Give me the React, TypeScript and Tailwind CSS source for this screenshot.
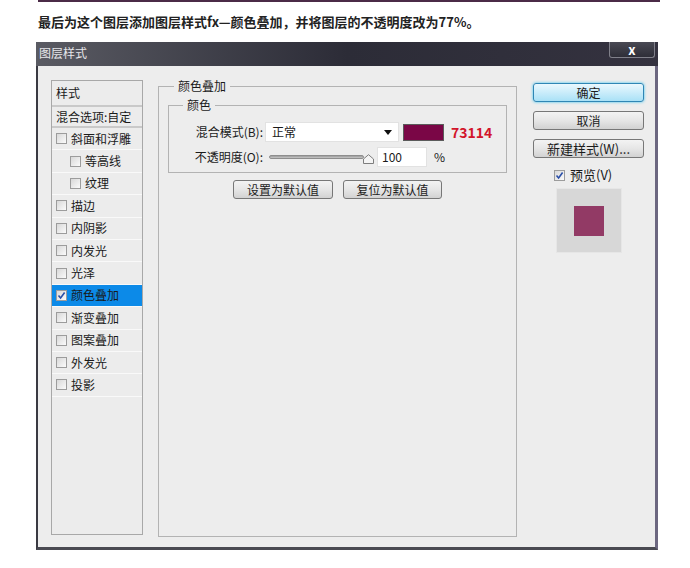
import type { ReactNode } from 'react';

const FONT = "font-['Noto_Sans_CJK_SC',sans-serif]";

type StyleItem = { label: string; indent?: boolean; checked?: boolean; selected?: boolean };

const STYLE_ITEMS: StyleItem[] = [
  { label: '斜面和浮雕' },
  { label: '等高线', indent: true },
  { label: '纹理', indent: true },
  { label: '描边' },
  { label: '内阴影' },
  { label: '内发光' },
  { label: '光泽' },
  { label: '颜色叠加', checked: true, selected: true },
  { label: '渐变叠加' },
  { label: '图案叠加' },
  { label: '外发光' },
  { label: '投影' },
];

function CheckBox({ checked }: { checked?: boolean }) {
  return (
    <span className="w-[11px] h-[11px] shrink-0 border border-[#9c9c9c] bg-linear-to-br from-[#d8d8d8] to-[#fbfbfb] flex items-center justify-center bg-white">
      {checked && (
        <svg width="9" height="9" viewBox="0 0 9 9">
          <path d="M1.5 4.5 L3.6 7 L7.6 1.6" fill="none" stroke="#2a4fa8" strokeWidth="1.6" />
        </svg>
      )}
    </span>
  );
}

function WinButton({ children, primary, className = '' }: { children: ReactNode; primary?: boolean; className?: string }) {
  return (
    <div
      className={`h-[19px] rounded-[3px] border flex items-center justify-center text-[12px] leading-none text-[#1c1c1c] ${
        primary
          ? 'border-[#2f86b5] bg-linear-to-b from-[#eaf8fe] to-[#a9e1f6] shadow-[0_0_3px_#39c4f0]'
          : 'border-[#777] bg-linear-to-b from-[#f3f3f3] via-[#e6e6e6] to-[#d2d2d2]'
      } ${className}`}
    >
      {children}
    </div>
  );
}

export default function App() {
  return (
    <div className={`w-[690px] h-[568px] bg-white overflow-hidden ${FONT}`}>
      <div className="ml-[38px] w-[622px] h-[2px] bg-[#4b2b47]" />
      <div className="mt-[11px] ml-[38px] text-[13px] leading-[18px] font-bold text-[#222]">
        最后为这个图层添加图层样式fx—颜色叠加，并将图层的不透明度改为77%。
      </div>

      {/* dialog */}
      <div className="mt-[11px] ml-[36px] w-[622px]">
        <div className="h-[24px] flex items-start justify-between bg-linear-to-r from-[#5a5b63] via-[#2c2c37] to-[#34323f]">
          <span className="pl-[3px] pt-[3px] text-[12px] leading-[16px] text-[#e6e6ea]">图层样式</span>
          <div className="mr-[3px] w-[46px] h-[16px] border border-t-0 border-[#80808a] rounded-b-[3px] bg-linear-to-b from-[#4a4a54] to-[#2e2e38] flex items-center justify-center text-white text-[13px] font-bold leading-none">
            x
          </div>
        </div>

        <div className="h-[484px] flex items-start pt-[12px] pl-[13px] bg-[#ededed] border-l-2 border-r-[3px] border-b-[3px] border-l-[#3a3a42] border-r-[#6c6780] border-b-[#4a4a52] text-[12px] text-[#1a1a1a]">
          {/* style list */}
          <div className="mt-[2px] w-[92px] h-[455px] border border-[#a8a8a8] bg-[#ececec]">
            <div className="h-[26px] flex items-center pl-[4px] border-b-2 border-[#c9c9c9]">样式</div>
            <div className="h-[21px] flex items-center pl-[4px] border-b-2 border-[#c9c9c9] whitespace-nowrap">混合选项:自定</div>
            {STYLE_ITEMS.map((item) => (
              <div
                key={item.label}
                className={`h-[22.4px] flex items-center gap-[4px] border-b border-[#f9f9f9] ${
                  item.indent ? 'pl-[18px]' : 'pl-[4px]'
                } ${item.selected ? 'bg-[#0c8ae8]' : ''}`}
              >
                <CheckBox checked={item.checked} />
                <span className="whitespace-nowrap">{item.label}</span>
              </div>
            ))}
          </div>

          {/* color overlay group */}
          <fieldset className="ml-[15px] w-[359px] h-[459px] border border-[#b3b3b3]">
            <legend className="ml-[15px] px-[4px] leading-[16px]">颜色叠加</legend>
            <fieldset className="mt-[3px] ml-[9px] w-[339px] border border-[#b3b3b3] pb-[5px]">
              <legend className="ml-[14px] px-[4px] leading-[16px]">颜色</legend>
              <div className="mt-[9px] h-[20px] flex items-center">
                <span className="w-[94px] text-right whitespace-nowrap">混合模式(B):</span>
                <div className="ml-[2px] w-[134px] h-[20px] bg-white border border-[#e2e2e2] flex items-center justify-between pl-[6px] pr-[6px]">
                  <span>正常</span>
                  <svg width="8" height="5" viewBox="0 0 8 5">
                    <path d="M0 0 H8 L4 5 Z" fill="#111" />
                  </svg>
                </div>
                <div className="ml-[4px] w-[41px] h-[17px] bg-[#7a0646] border border-[#5b5b5b]" />
                <span className="ml-[7px] text-[14px] font-bold text-[#d2152b] leading-none">73114</span>
              </div>
              <div className="mt-[5px] h-[20px] flex items-center">
                <span className="w-[94px] text-right whitespace-nowrap">不透明度(O):</span>
                <div className="ml-[6px] w-[105px] h-[12px] flex items-center">
                  <div className="w-[95px] h-[4px] rounded-full bg-linear-to-b from-[#9c9c9c] to-[#c8c8c8] border border-[#8e8e8e]" />
                  <svg width="11" height="10" viewBox="0 0 11 10" className="-ml-[1px] mt-[4px]">
                    <path d="M0.5 9.5 V5 L5.5 0.7 L10.5 5 V9.5 Z" fill="#f4f4f4" stroke="#7d7d7d" />
                  </svg>
                </div>
                <div className="ml-[3px] w-[50px] h-[20px] bg-white border border-[#e2e2e2] flex items-center pl-[4px]">100</div>
                <span className="ml-[7px]">%</span>
              </div>
            </fieldset>
            <div className="mt-[7px] flex gap-[10px] pl-[74px]">
              <WinButton className="w-[100px]">设置为默认值</WinButton>
              <WinButton className="w-[99px]">复位为默认值</WinButton>
            </div>
          </fieldset>

          {/* right column */}
          <div className="ml-[16px] mt-[5px] w-[111px] flex flex-col">
            <WinButton primary>确定</WinButton>
            <WinButton className="mt-[9px]">取消</WinButton>
            <WinButton className="mt-[9px] text-[13px]">新建样式(W)...</WinButton>
            <div className="mt-[9px] h-[16px] flex items-center gap-[5px] pl-[21px] text-[13px]">
              <CheckBox checked />
              <span>预览(V)</span>
            </div>
            <div className="mt-[5px] ml-[23px] w-[66px] h-[65px] bg-[#d7d7d7] border border-[#e6e6e6] flex items-center justify-center">
              <div className="w-[30px] h-[30px] bg-[#923a65]" />
            </div>
          </div>
        </div>
      </div>
    </div>
  );
}
